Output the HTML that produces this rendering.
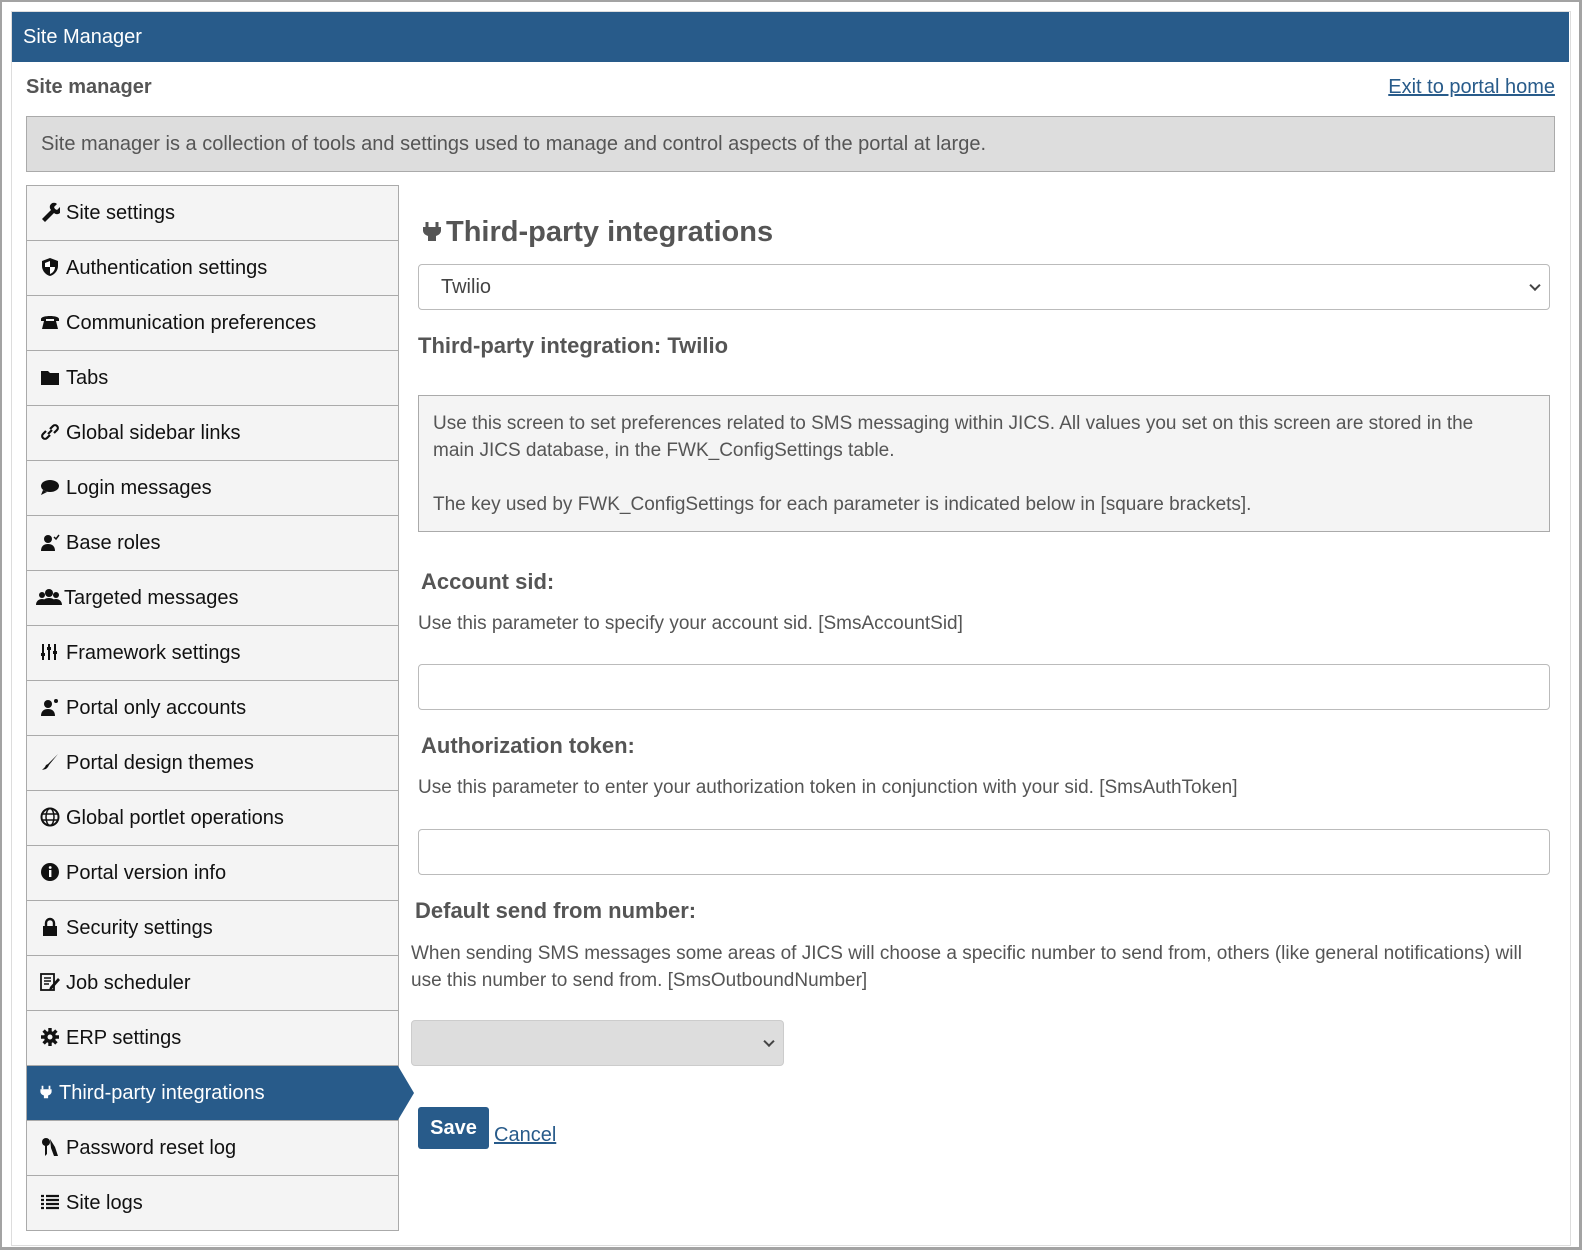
<!DOCTYPE html>
<html><head><meta charset="utf-8"><style>
*{box-sizing:border-box;margin:0;padding:0}
body{width:1582px;height:1250px;background:#fff;font-family:"Liberation Sans","DejaVu Sans",sans-serif;color:#555;position:relative;overflow:hidden}
.outer{position:absolute;left:0;top:0;width:1582px;height:1250px;border:3px solid #a3a3a3;border-left-width:2px;border-top-width:2px}
.panel{position:absolute;left:11px;top:11px;width:1560px;height:1235px;border:1px solid #ddd}
.hdr{position:absolute;left:12px;top:12px;width:1557px;height:50px;background:#285b8a;color:#fff;font-size:20px;line-height:50px;padding-left:11px}
.a{position:absolute;white-space:nowrap}
.side{position:absolute;left:26px;top:185px;width:373px;border:1px solid #aaa;border-bottom:none}
.it{height:55px;background:#f4f4f4;border-bottom:1px solid #aaa;font-size:20px;color:#111;line-height:54px;padding-left:13px;position:relative}
.it svg{width:20px;height:20px;vertical-align:-3px;margin-right:6px}
.it.on{background:#285b8a;color:#fff}
.it.on:after{content:"";position:absolute;right:-16px;top:0;border-left:16px solid #285b8a;border-top:27px solid transparent;border-bottom:27px solid transparent}
.box{position:absolute;border:1px solid #bbb;border-radius:4px;background:#fff}
h3{font-size:22px;font-weight:bold;color:#555}
.p{font-size:19px;line-height:27px;color:#555}
.chev{position:absolute;right:10px;top:50%;width:8px;height:8px;border-right:2px solid #444;border-bottom:2px solid #444;transform:translateY(-70%) rotate(45deg)}
</style></head><body>
<div class="outer"></div>
<div class="panel"></div>
<div class="hdr">Site Manager</div>
<div class="a" style="left:26px;top:76px;font-size:20px;font-weight:bold;color:#555">Site manager</div>
<div class="a" style="right:27px;top:76px;font-size:20px;color:#285b8a;text-decoration:underline">Exit to portal home</div>
<div class="a" style="left:26px;top:116px;width:1529px;height:56px;background:#ddd;border:1px solid #aaa;font-size:20px;line-height:54px;padding-left:14px;color:#555">Site manager is a collection of tools and settings used to manage and control aspects of the portal at large.</div>

<div class="side">
<div class="it"><svg viewBox="0 0 20 20"><path d="M2 17l9-9a4 4 0 0 1 6-6l-3 3 1 2 2 1 3-3a4 4 0 0 1-6 6l-9 9z" fill="#111"/></svg>Site settings</div>
<div class="it"><svg viewBox="0 0 20 20"><path d="M10 1l8 3v5c0 5-4 9-8 10C6 18 2 14 2 9V4z" fill="#111"/><path d="M10 4v6h5c0 3-2 6-5 7V10H5V6z" fill="#fff"/></svg>Authentication settings</div>
<div class="it"><svg viewBox="0 0 20 20"><path d="M1 7c0-4 18-4 18 0v2h-5V7H6v2H1z M4 9h12l2 8H2z" fill="#111"/></svg>Communication preferences</div>
<div class="it"><svg viewBox="0 0 20 20"><path d="M1 4h7l2 2h9v12H1z" fill="#111"/></svg>Tabs</div>
<div class="it"><svg viewBox="0 0 20 20"><path d="M8 12l4-4M6 9l-3 3a2.5 2.5 0 0 0 4 4l3-3M14 11l3-3a2.5 2.5 0 0 0-4-4l-3 3" stroke="#111" stroke-width="2.2" fill="none"/></svg>Global sidebar links</div>
<div class="it"><svg viewBox="0 0 20 20"><ellipse cx="10" cy="9" rx="9" ry="6" fill="#111"/><path d="M3 13l-2 5 6-3z" fill="#111"/></svg>Login messages</div>
<div class="it"><svg viewBox="0 0 20 20"><circle cx="8" cy="7" r="4" fill="#111"/><path d="M1 19c0-5 3-7 7-7s7 2 7 7z" fill="#111"/><path d="M14 5l2 2 3-4" stroke="#111" stroke-width="1.5" fill="none"/></svg>Base roles</div>
<div class="it" style="padding-left:9px"><svg viewBox="0 0 26 20" style="width:26px;margin-right:2px"><circle cx="6" cy="8" r="3" fill="#111"/><circle cx="20" cy="8" r="3" fill="#111"/><circle cx="13" cy="6" r="4" fill="#111"/><path d="M0 18c0-4 3-6 6-6s6 2 6 6zM14 18c0-4 3-6 6-6s6 2 6 6zM6 18c0-5 3-7 7-7s7 2 7 7z" fill="#111"/></svg>Targeted messages</div>
<div class="it"><svg viewBox="0 0 20 20"><path d="M3 2v16M9 2v16M15 2v16" stroke="#111" stroke-width="2"/><rect x="1" y="11" width="4" height="3" fill="#111"/><rect x="7" y="5" width="4" height="3" fill="#111"/><rect x="13" y="9" width="4" height="3" fill="#111"/></svg>Framework settings</div>
<div class="it"><svg viewBox="0 0 20 20"><circle cx="8" cy="7" r="4" fill="#111"/><path d="M1 19c0-5 3-7 7-7s7 2 7 7z" fill="#111"/><circle cx="16" cy="4" r="2" fill="#111"/></svg>Portal only accounts</div>
<div class="it"><svg viewBox="0 0 20 20"><path d="M18 2L8 12l-2 1-1 2-3 3 4-1 2-2 1-2z" fill="#111"/></svg>Portal design themes</div>
<div class="it"><svg viewBox="0 0 20 20"><circle cx="10" cy="10" r="8.5" stroke="#111" stroke-width="2" fill="none"/><ellipse cx="10" cy="10" rx="4" ry="8.5" stroke="#111" stroke-width="1.5" fill="none"/><path d="M2 7h16M2 13h16" stroke="#111" stroke-width="1.5"/></svg>Global portlet operations</div>
<div class="it"><svg viewBox="0 0 20 20"><circle cx="10" cy="10" r="9" fill="#111"/><rect x="9" y="8" width="2.4" height="7" fill="#fff"/><circle cx="10.2" cy="5.5" r="1.4" fill="#fff"/></svg>Portal version info</div>
<div class="it"><svg viewBox="0 0 20 20"><rect x="3" y="9" width="14" height="10" fill="#111"/><path d="M6 9V6a4 4 0 0 1 8 0v3" stroke="#111" stroke-width="2.4" fill="none"/></svg>Security settings</div>
<div class="it"><svg viewBox="0 0 20 20"><rect x="1" y="2" width="13" height="16" stroke="#111" stroke-width="1.8" fill="none"/><path d="M4 6h7M4 9h7M4 12h5" stroke="#111" stroke-width="1.5"/><path d="M18 6l-8 9-1 3 3-1 8-9z" fill="#111"/></svg>Job scheduler</div>
<div class="it"><svg viewBox="0 0 20 20"><circle cx="10" cy="10" r="6" fill="#111"/><path d="M10 1v18M1 10h18M3.6 3.6l12.8 12.8M16.4 3.6L3.6 16.4" stroke="#111" stroke-width="3.4"/><circle cx="10" cy="10" r="2.5" fill="#f4f4f4"/></svg>ERP settings</div>
<div class="it on" style="padding-left:12px"><svg viewBox="0 0 20 20" style="width:14px;margin-right:6px"><path d="M5 1v5M15 1v5" stroke="#fff" stroke-width="2.5"/><path d="M2 6h16v4a8 6 0 0 1-5 5v4H7v-4a8 6 0 0 1-5-5z" fill="#fff"/></svg>Third-party integrations</div>
<div class="it"><svg viewBox="0 0 20 20"><circle cx="6" cy="5" r="4" fill="#111"/><path d="M5 8v11l2-2V8z" fill="#111"/><path d="M10 2l5 8 3 9h-4l-3-8z" fill="#111"/></svg>Password reset log</div>
<div class="it"><svg viewBox="0 0 20 20"><path d="M1 4h3M1 8h3M1 12h3M1 16h3M6 4h13M6 8h13M6 12h13M6 16h13" stroke="#111" stroke-width="2.2"/></svg>Site logs</div>
</div>

<div class="a" style="left:422px;top:216px;font-size:29px;font-weight:bold;color:#555"><svg viewBox="0 0 20 20" style="width:20px;height:26px;vertical-align:-3px;margin-right:4px"><path d="M5 1v5M15 1v5" stroke="#555" stroke-width="3"/><path d="M1 6h18v4a8 6 0 0 1-5 5v5H6v-5a8 6 0 0 1-5-5z" fill="#555"/></svg>Third-party integrations</div>
<div class="box" style="left:418px;top:264px;width:1132px;height:46px;font-size:20px;line-height:44px;padding-left:22px;color:#444">Twilio<span class="chev"></span></div>
<div class="a" style="left:418px;top:333px"><h3>Third-party integration: Twilio</h3></div>
<div class="a p" style="left:418px;top:395px;width:1132px;height:137px;background:#f4f4f4;border:1px solid #aaa;padding:14px 60px 14px 14px;white-space:normal">Use this screen to set preferences related to SMS messaging within JICS. All values you set on this screen are stored in the main JICS database, in the FWK_ConfigSettings table.<br><br>The key used by FWK_ConfigSettings for each parameter is indicated below in [square brackets].</div>

<div class="a" style="left:421px;top:569px"><h3>Account sid:</h3></div>
<div class="a p" style="left:418px;top:610px">Use this parameter to specify your account sid. [SmsAccountSid]</div>
<div class="box" style="left:418px;top:664px;width:1132px;height:46px"></div>

<div class="a" style="left:421px;top:733px"><h3>Authorization token:</h3></div>
<div class="a p" style="left:418px;top:774px">Use this parameter to enter your authorization token in conjunction with your sid. [SmsAuthToken]</div>
<div class="box" style="left:418px;top:829px;width:1132px;height:46px"></div>

<div class="a" style="left:415px;top:898px"><h3>Default send from number:</h3></div>
<div class="a p" style="left:411px;top:940px;width:1145px;white-space:normal">When sending SMS messages some areas of JICS will choose a specific number to send from, others (like general notifications) will use this number to send from. [SmsOutboundNumber]</div>
<div class="box" style="left:411px;top:1020px;width:373px;height:46px;background:#ddd;border-color:#ccc"><span class="chev"></span></div>

<div class="a" style="left:418px;top:1107px;width:71px;height:42px;background:#285b8a;border-radius:3px;color:#fff;font-size:20px;font-weight:bold;text-align:center;line-height:42px">Save</div>
<div class="a" style="left:494px;top:1124px;font-size:20px;color:#285b8a;text-decoration:underline">Cancel</div>
</body></html>
